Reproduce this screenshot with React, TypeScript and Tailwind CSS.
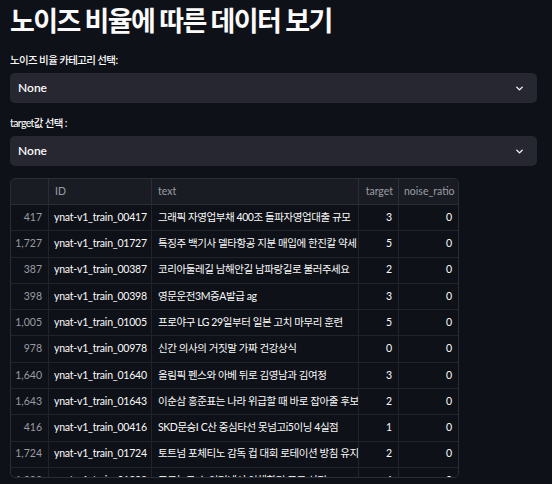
import { ChevronDown } from 'lucide-react';

const rows = [
  { idx: '417', id: 'ynat-v1_train_00417', text: '그래픽 자영업부채 400조 돌파자영업대출 규모', target: 3, ratio: 0 },
  { idx: '1,727', id: 'ynat-v1_train_01727', text: '특징주 백기사 델타항공 지분 매입에 한진칼 약세', target: 5, ratio: 0 },
  { idx: '387', id: 'ynat-v1_train_00387', text: '코리아둘레길 남해안길 남파랑길로 불러주세요', target: 2, ratio: 0 },
  { idx: '398', id: 'ynat-v1_train_00398', text: '영문운전3M증A발급 ag', target: 3, ratio: 0 },
  { idx: '1,005', id: 'ynat-v1_train_01005', text: '프로야구 LG 29일부터 일본 고치 마무리 훈련', target: 5, ratio: 0 },
  { idx: '978', id: 'ynat-v1_train_00978', text: '신간 의사의 거짓말 가짜 건강상식', target: 0, ratio: 0 },
  { idx: '1,640', id: 'ynat-v1_train_01640', text: '올림픽 펜스와 아베 뒤로 김영남과 김여정', target: 3, ratio: 0 },
  { idx: '1,643', id: 'ynat-v1_train_01643', text: '이순삼 홍준표는 나라 위급할 때 바로 잡아줄 후보', target: 2, ratio: 0 },
  { idx: '416', id: 'ynat-v1_train_00416', text: 'SKD문승I C산 중심타선 못넘고i5이닝 4실점', target: 1, ratio: 0 },
  { idx: '1,724', id: 'ynat-v1_train_01724', text: '토트넘 포체티노 감독 컵 대회 로테이션 방침 유지 시사', target: 2, ratio: 0 },
  { idx: '1,209', id: 'ynat-v1_train_01209', text: '프로농구 스 인터넷서 이해하기 프로 선정', target: 4, ratio: 0 },
];

const font = { fontFamily: "Lato, 'Noto Sans CJK KR', sans-serif" };

function SelectBox({ label }: { label: string }) {
  return (
    <div className="flex flex-col gap-[6px]">
      <label className="text-[10.5px] font-medium leading-[14px] tracking-[-0.06em] text-[#fafafa]">{label}</label>
      <div className="flex h-[30px] items-center justify-between rounded-[5px] bg-[#262730] pl-2 pr-[12px]">
        <span className="text-[12px] font-semibold text-[#fafafa]">None</span>
        <ChevronDown size={11} strokeWidth={3} className="text-[#fafafa]" />
      </div>
    </div>
  );
}

export default function App() {
  return (
    <div className="min-h-[484px] bg-[#0e1117] px-[10px] pt-[2px]" style={font}>
      <h1 className="whitespace-nowrap text-[27px] font-bold leading-[38px] tracking-[-0.06em] text-[#fafafa]">
        노이즈 비율에 따른 데이터 보기
      </h1>
      <div className="mt-[13px] flex w-[527px] flex-col gap-[13px]">
        <SelectBox label="노이즈 비율 카테고리 선택:" />
        <SelectBox label="target값 선택 :" />
      </div>

      <div className="mt-[12px] h-[300px] w-[449px] overflow-hidden rounded-[5px] border border-[#2b2d36] text-[10.5px]">
        <div className="grid h-[26px] grid-cols-[38px_103px_207px_40px_1fr] bg-[#1a1c24] text-[#9a9ca3]">
          <div className="border-r border-b border-[#2b2d36]" />
          <div className="flex items-center border-r border-b border-[#2b2d36] px-[6px]">ID</div>
          <div className="flex items-center border-r border-b border-[#2b2d36] px-[6px]">text</div>
          <div className="flex items-center justify-end border-r border-b border-[#2b2d36] px-[5px]">target</div>
          <div className="flex items-center justify-end border-b border-[#2b2d36] px-[5px]">noise_ratio</div>
        </div>
        {rows.map(r => (
          <div key={r.id} className="grid h-[26.3px] grid-cols-[38px_103px_207px_40px_1fr] text-[#fafafa]">
            <div className="flex items-center justify-end border-r border-b border-[#22242c] px-[6px] text-[#9a9ca3]">{r.idx}</div>
            <div className="flex items-center overflow-hidden whitespace-nowrap border-r border-b border-[#22242c] px-[5px] tracking-[-0.02em]">
              {r.id}
            </div>
            <div className="flex items-center overflow-hidden whitespace-nowrap border-r border-b border-[#22242c] px-[6px] tracking-[-0.04em]">
              {r.text}
            </div>
            <div className="flex items-center justify-end border-r border-b border-[#22242c] px-[6px]">{r.target}</div>
            <div className="flex items-center justify-end border-b border-[#22242c] px-[6px]">{r.ratio}</div>
          </div>
        ))}
      </div>
    </div>
  );
}
